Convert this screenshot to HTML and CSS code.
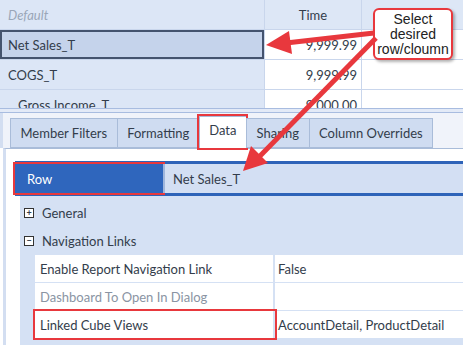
FILE: index.html
```html
<!DOCTYPE html>
<html>
<head>
    <title>Cube View Data</title>
    <link rel="stylesheet" href="styles.css">
</head>
<body>
    <div class="grid">
        <div class="cell head first default">Default</div>
        <div class="cell head time">Time</div>
        <div class="cell head blank"></div>

        <div class="cell first selected">Net Sales_T</div>
        <div class="cell num">9,999.99</div>
        <div class="cell blank"></div>

        <div class="cell first">COGS_T</div>
        <div class="cell num">9,999.99</div>
        <div class="cell blank"></div>

        <div class="cell first indent">Gross Income_T</div>
        <div class="cell num">9,000.00</div>
        <div class="cell blank"></div>
    </div>

    <div class="split"></div>

    <div class="tabs">
        <div class="tab">Member Filters</div>
        <div class="tab">Formatting</div>
        <div class="tab active marked">Data</div>
        <div class="tab">Sharing</div>
        <div class="tab">Column Overrides</div>
    </div>

    <div class="panel">
        <div class="band">
            <div class="band-label marked">Row</div>
            <div class="band-value">Net Sales_T</div>
        </div>

        <div class="props">
            <div class="group"><span class="box">+</span>General</div>
            <div class="group"><span class="box">&minus;</span>Navigation Links</div>
            <div class="prop">
                <div class="pname">Enable Report Navigation Link</div>
                <div class="pval">False</div>
            </div>
            <div class="prop">
                <div class="pname muted">Dashboard To Open In Dialog</div>
                <div class="pval"></div>
            </div>
            <div class="prop">
                <div class="pname marked">Linked Cube Views</div>
                <div class="pval">AccountDetail, ProductDetail</div>
            </div>
        </div>
    </div>

    <div class="callout">Select<br>desired<br>row/cloumn</div>

    <svg class="arrows" width="463" height="345" viewBox="0 0 463 345">
        <line x1="374" y1="33" x2="286" y2="43" stroke="#e8383d" stroke-width="5"/>
        <polygon points="266,45 289,31 292,54" fill="#e8383d"/>
        <line x1="376" y1="38" x2="259" y2="157" stroke="#e8383d" stroke-width="5"/>
        <polygon points="243,171 251,146 268,163" fill="#e8383d"/>
    </svg>
</body>
</html>
```

FILE: styles.css
```css
body { margin: 0; font-family: Lato, "Noto Sans", sans-serif; font-size: 13px; color: #333d4b; background: #fff; width: 463px; height: 345px; overflow: hidden; position: relative; white-space: nowrap; }

.grid { display: grid; grid-template-columns: 265px 97px 1fr; grid-auto-rows: 30px; height: 108px; overflow: hidden; background: #fff; }
.cell { display: flex; align-items: center; padding: 0 8px; border-bottom: 1px solid #c9d6ec; border-right: 1px solid #c9d6ec; }
.head { background: #dde7f6; }
.first { background: #dce6f6; }
.default { font-style: italic; color: #9aa6b8; }
.time { justify-content: center; }
.num { justify-content: flex-end; padding-right: 4px; }
.blank { border-right: none; }
.selected { background: #c5d3eb; box-shadow: inset 0 0 0 2px #44536e; }
.indent { padding-left: 18px; }

.split { height: 3px; border-top: 1px solid #a8bce0; border-bottom: 1px solid #a8bce0; background: #e3eaf7; }

.tabs { display: flex; align-items: flex-end; height: 35px; box-sizing: border-box; padding: 6px 0 0 7px; background: #f0f3fa; border-left: 3px solid #d3def1; }
.tab { height: 28px; padding: 0 9.5px; display: flex; align-items: center; background: #cfdcf1; border: 1px solid #a9bcd9; border-right: none; }
.tab:last-child { border-right: 1px solid #a9bcd9; }
.tab.active { background: #fff; height: 32px; border-bottom: none; align-items: flex-start; padding-top: 5px; box-sizing: border-box; }

.marked { outline: 2px solid #e8383d; }

.panel { margin-left: 3px; border-left: 3px solid #d3def1; border-top: 1px solid #a9bcd9; padding: 12px 0 0 9px; background: #fff; height: 198px; box-sizing: border-box; }
.band { display: flex; height: 35px; border-top: 3px solid #2e63b8; border-bottom: 3px solid #2e63b8; box-sizing: border-box; }
.band-label { width: 148px; background: #2f66bd; color: #fff; display: flex; align-items: center; padding-left: 12px; box-sizing: border-box; }
.band-value { flex: 1; background: #d3dff3; display: flex; align-items: center; padding-left: 8px; border-left: 2px solid #9fb6dc; }

.props { margin-left: 5px; background: #d5e1f4; padding-top: 3px; height: 150px; }
.group { height: 28px; display: flex; align-items: center; padding-left: 4px; }
.box { width: 8px; height: 8px; border: 1px solid #333; font-size: 9px; line-height: 7px; text-align: center; margin-right: 8px; font-weight: bold; background: #fff; }
.prop { display: flex; margin-left: 15px; height: 27px; background: #fff; border-bottom: 1px solid #d5e1f4; }
.pname { width: 240px; display: flex; align-items: center; padding-left: 5px; box-sizing: border-box; border-right: 2px solid #d5e1f4; }
.pval { flex: 1; display: flex; align-items: center; padding-left: 3px; }
.muted { color: #8a94a3; }

.callout { position: absolute; left: 373px; top: 8px; width: 80px; height: 52px; box-sizing: border-box; border: 2px solid #e8383d; border-radius: 6px; background: #fff; font-family: "Liberation Sans", Arial, sans-serif; font-size: 14px; line-height: 15px; color: #222; text-align: center; padding-top: 2px; box-shadow: 2px 2px 3px rgba(0,0,0,0.3); }
.arrows { position: absolute; left: 0; top: 0; pointer-events: none; }
```
